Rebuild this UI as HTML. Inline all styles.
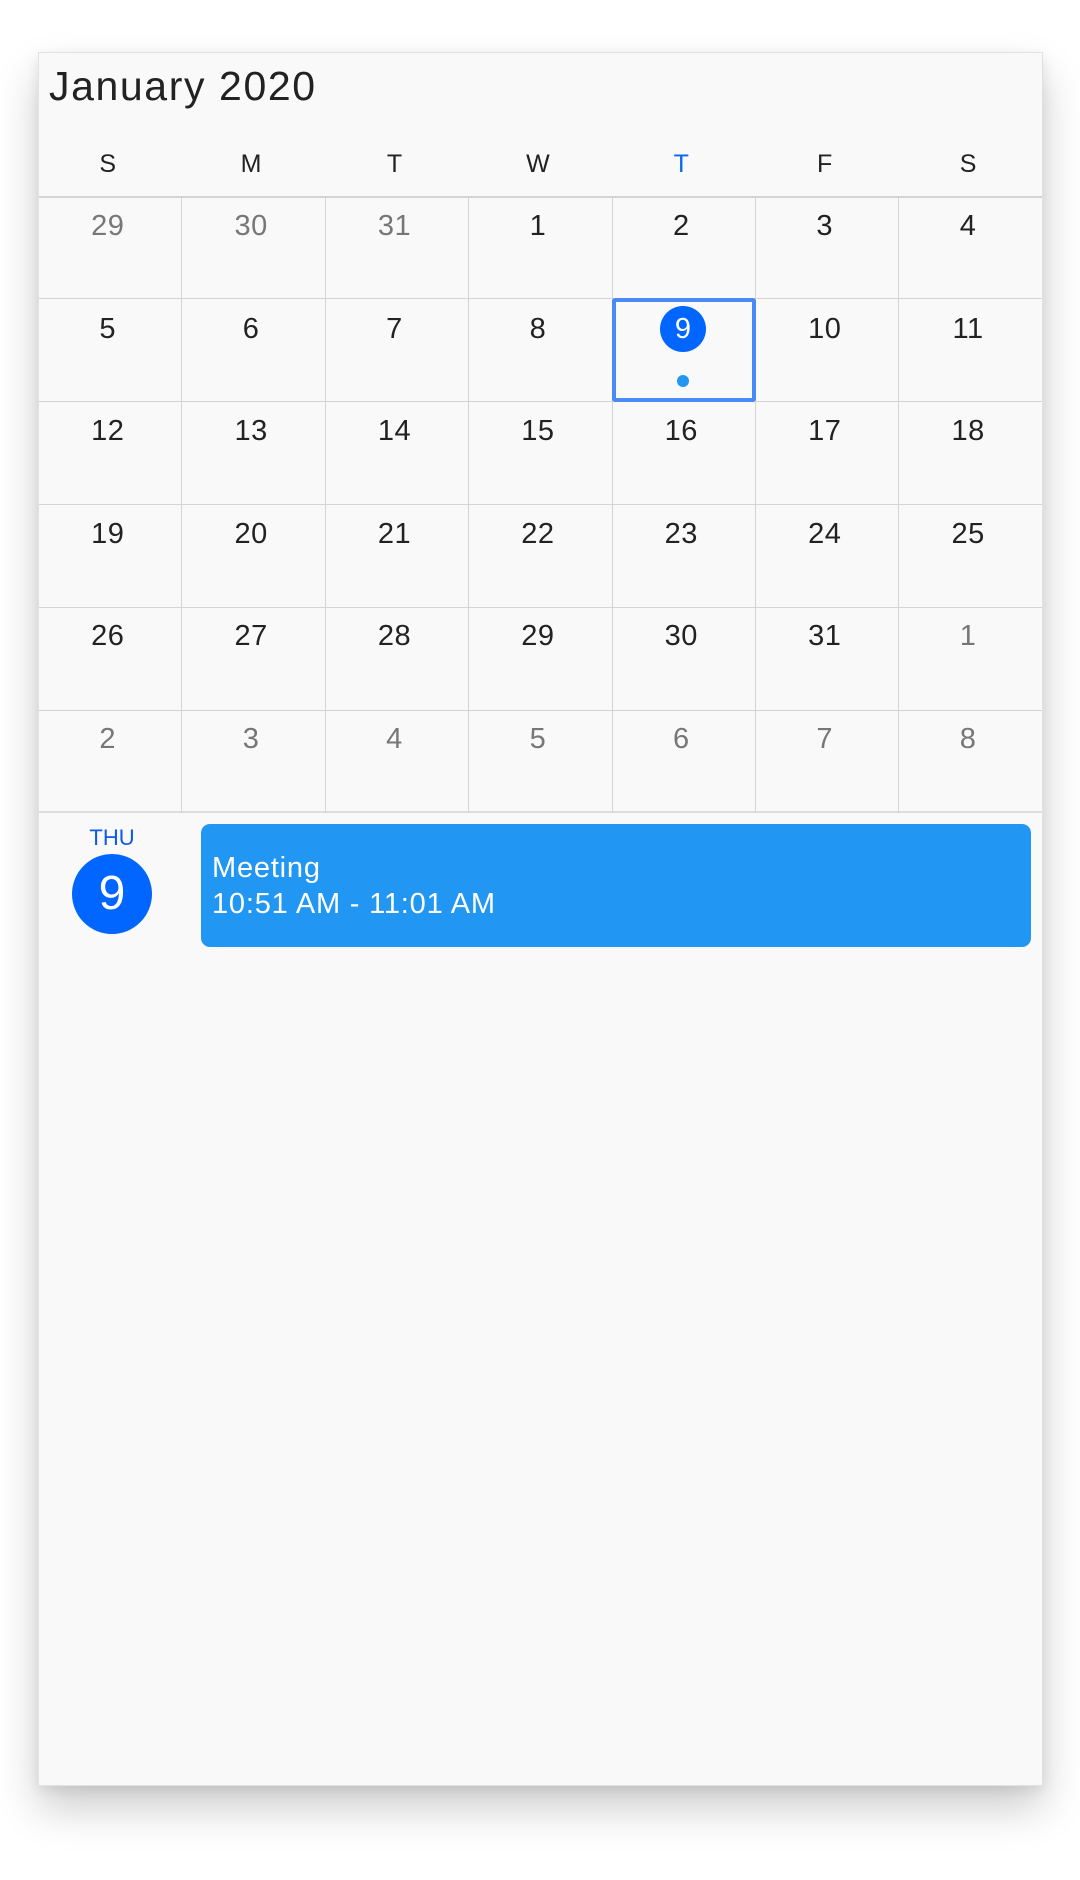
<!DOCTYPE html>
<html><head><meta charset="utf-8"><style>
*{margin:0;padding:0;box-sizing:border-box}
body{width:1080px;height:1880px;background:#fff;font-family:"Liberation Sans",sans-serif;position:relative;overflow:hidden}
.card{position:absolute;left:38px;top:52px;width:1005px;height:1734px;background:#f9f9f9;border:1px solid #e2e2e2;box-shadow:0 22px 40px rgba(0,0,0,0.2),0 4px 12px rgba(0,0,0,0.08)}
.title{position:absolute;left:10px;top:10px;font-size:41px;color:#222;letter-spacing:1.6px}
.wd{position:absolute;top:97px;width:143.4px;text-align:center;font-size:25px;color:#222;margin-left:-3px}
.hl{position:absolute;left:0;width:1003px;height:1px;background:#d4d4d4}
.vl{position:absolute;top:144px;width:1px;height:616px;background:#d4d4d4}
.d{position:absolute;width:143.4px;text-align:center;font-size:29px;color:#222;margin-left:-3px;letter-spacing:0.5px}
.g{color:#777}
</style></head><body>
<div class="card">
<div class="title">January 2020</div>
<div class="wd" style="left:0">S</div><div class="wd" style="left:143.4px">M</div><div class="wd" style="left:286.8px">T</div><div class="wd" style="left:430.2px">W</div><div class="wd" style="left:573.6px;color:#0a66f0">T</div><div class="wd" style="left:717px">F</div><div class="wd" style="left:860.4px">S</div>
<div class="hl" style="top:143px;height:2px"></div>
<div class="hl" style="top:245px"></div><div class="hl" style="top:348px"></div><div class="hl" style="top:451px"></div><div class="hl" style="top:554px"></div><div class="hl" style="top:657px"></div>
<div class="hl" style="top:758px;height:2px;background:#ddd"></div>
<div class="vl" style="left:142.4px"></div><div class="vl" style="left:285.8px"></div><div class="vl" style="left:429.2px"></div><div class="vl" style="left:572.6px"></div><div class="vl" style="left:716px"></div><div class="vl" style="left:859.4px"></div>
<div id="days"></div>
<div style="position:absolute;left:573px;top:245px;width:144px;height:104px;border:4px solid #4a8af4;border-radius:3px"></div>
<div style="position:absolute;left:621px;top:253px;width:46px;height:46px;border-radius:50%;background:#0066ff;color:#fff;font-size:29px;text-align:center;line-height:46px">9</div>
<div style="position:absolute;left:638px;top:322px;width:12px;height:12px;border-radius:50%;background:#2196f3"></div>
<div style="position:absolute;left:33px;top:772px;width:80px;text-align:center;font-size:22px;color:#0a5ce6">THU</div>
<div style="position:absolute;left:33px;top:801px;width:80px;height:80px;border-radius:50%;background:#0066ff;color:#fff;font-size:48px;text-align:center;line-height:80px">9</div>
<div style="position:absolute;left:162px;top:771px;width:830px;height:123px;border-radius:9px;background:#2196f3;color:#fff;font-size:29px;padding:26px 0 0 11px;line-height:36px;letter-spacing:0.8px">Meeting<br>10:51 AM - 11:01 AM</div>
</div>
<script>
var rows=[[29,30,31,1,2,3,4],[5,6,7,8,9,10,11],[12,13,14,15,16,17,18],[19,20,21,22,23,24,25],[26,27,28,29,30,31,1],[2,3,4,5,6,7,8]];
var h='';
rows.forEach(function(r,i){r.forEach(function(n,j){
 if(i==1&&j==4)return;
 var g=(i==0&&j<3)||(i==4&&j==6)||i==5;
 h+='<div class="d'+(g?' g':'')+'" style="left:'+(j*143.4)+'px;top:'+(157+i*102.6)+'px">'+n+'</div>';
});});
document.getElementById('days').innerHTML=h;
</script>
</body></html>
